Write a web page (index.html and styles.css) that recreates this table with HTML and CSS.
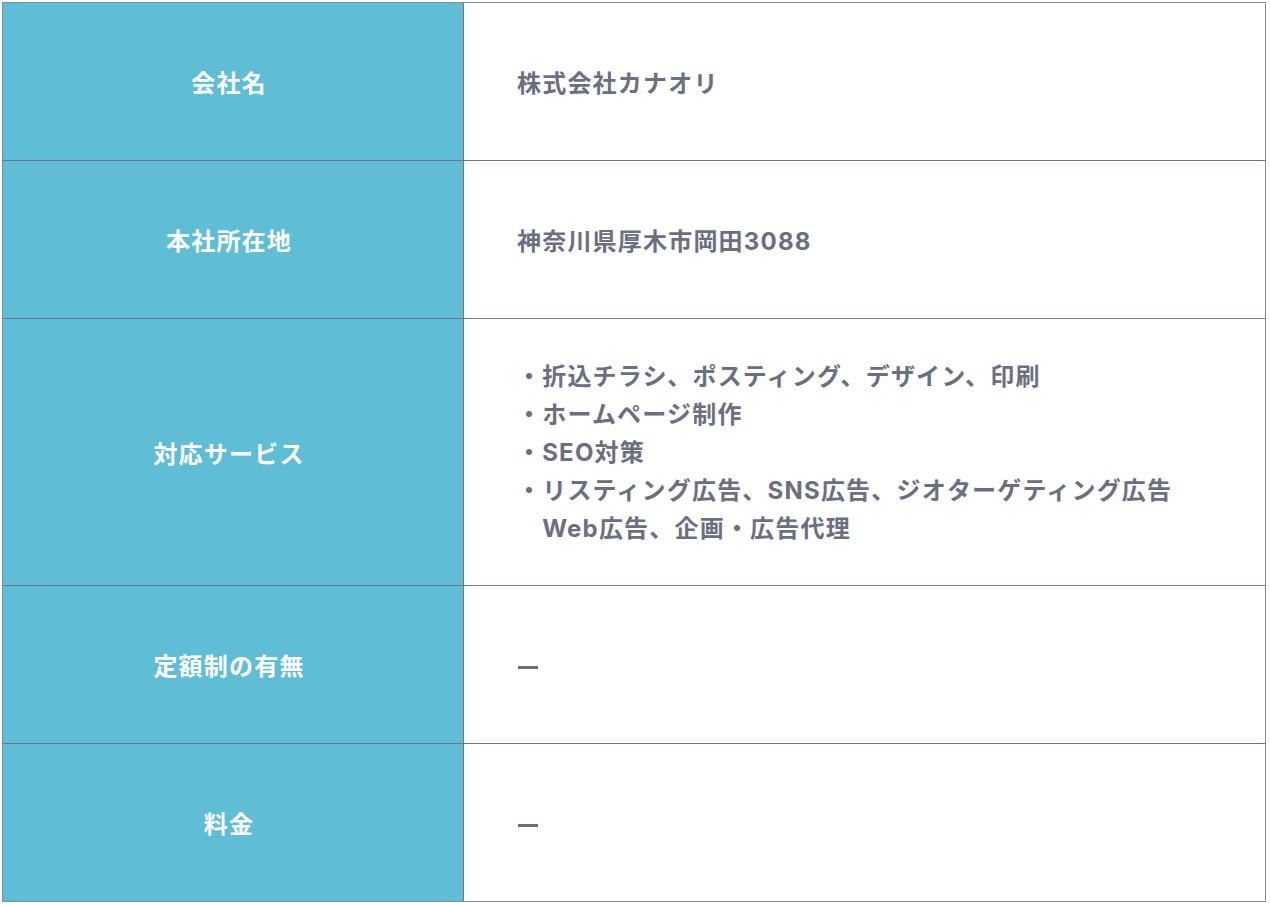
FILE: index.html
```html
<!DOCTYPE html>
<html lang="ja">
<head>
<meta charset="utf-8">
<title>会社概要</title>
<link rel="stylesheet" href="styles.css">
</head>
<body>
<div class="info">
  <div class="row">
    <div class="label">会社名</div>
    <div class="value">株式会社カナオリ</div>
  </div>
  <div class="row">
    <div class="label">本社所在地</div>
    <div class="value">神奈川県厚木市岡田3088</div>
  </div>
  <div class="row">
    <div class="label">対応サービス</div>
    <div class="value">
      <ul class="list">
        <li>・折込チラシ、ポスティング、デザイン、印刷</li>
        <li>・ホームページ制作</li>
        <li>・SEO対策</li>
        <li>・リスティング広告、SNS広告、ジオターゲティング広告<br>Web広告、企画・広告代理</li>
      </ul>
    </div>
  </div>
  <div class="row">
    <div class="label">定額制の有無</div>
    <div class="value"><span class="dash"></span></div>
  </div>
  <div class="row">
    <div class="label">料金</div>
    <div class="value"><span class="dash"></span></div>
  </div>
</div>
</body>
</html>
```
FILE: styles.css
```css
html, body {
  margin: 0;
  padding: 0;
  background: #ffffff;
}
body {
  padding: 2px;
  font-family: "Inter", "Noto Sans CJK JP", sans-serif;
  font-weight: 700;
  font-size: 24px;
  letter-spacing: 1.2px;
  line-height: 38px;
  color: #6c6f80;
}
.info {
  width: 1262px;
  border: 1px solid #878a97;
}
.row {
  display: grid;
  grid-template-columns: 461px 1fr;
  border-bottom: 1px solid #71748a;
}
.row:last-child {
  border-bottom: none;
}
.label {
  background: #5fbdd6;
  color: #ffffff;
  border-right: 1px solid #71748a;
  min-height: 157px;
  display: flex;
  align-items: center;
  justify-content: center;
  padding-top: 5px;
  padding-right: 8px;
  box-sizing: border-box;
}
.value {
  display: flex;
  align-items: center;
  padding-left: 53px;
  padding-top: 5px;
  box-sizing: border-box;
  min-height: 157px;
}
.list {
  list-style: none;
  margin: 0;
  padding: 34px 0 37px;
}
.list li {
  padding-left: 25.2px;
  text-indent: -25.2px;
}
.dash {
  display: block;
  width: 20px;
  height: 3px;
  margin-left: 1px;
  background: #6c6f80;
}
```
